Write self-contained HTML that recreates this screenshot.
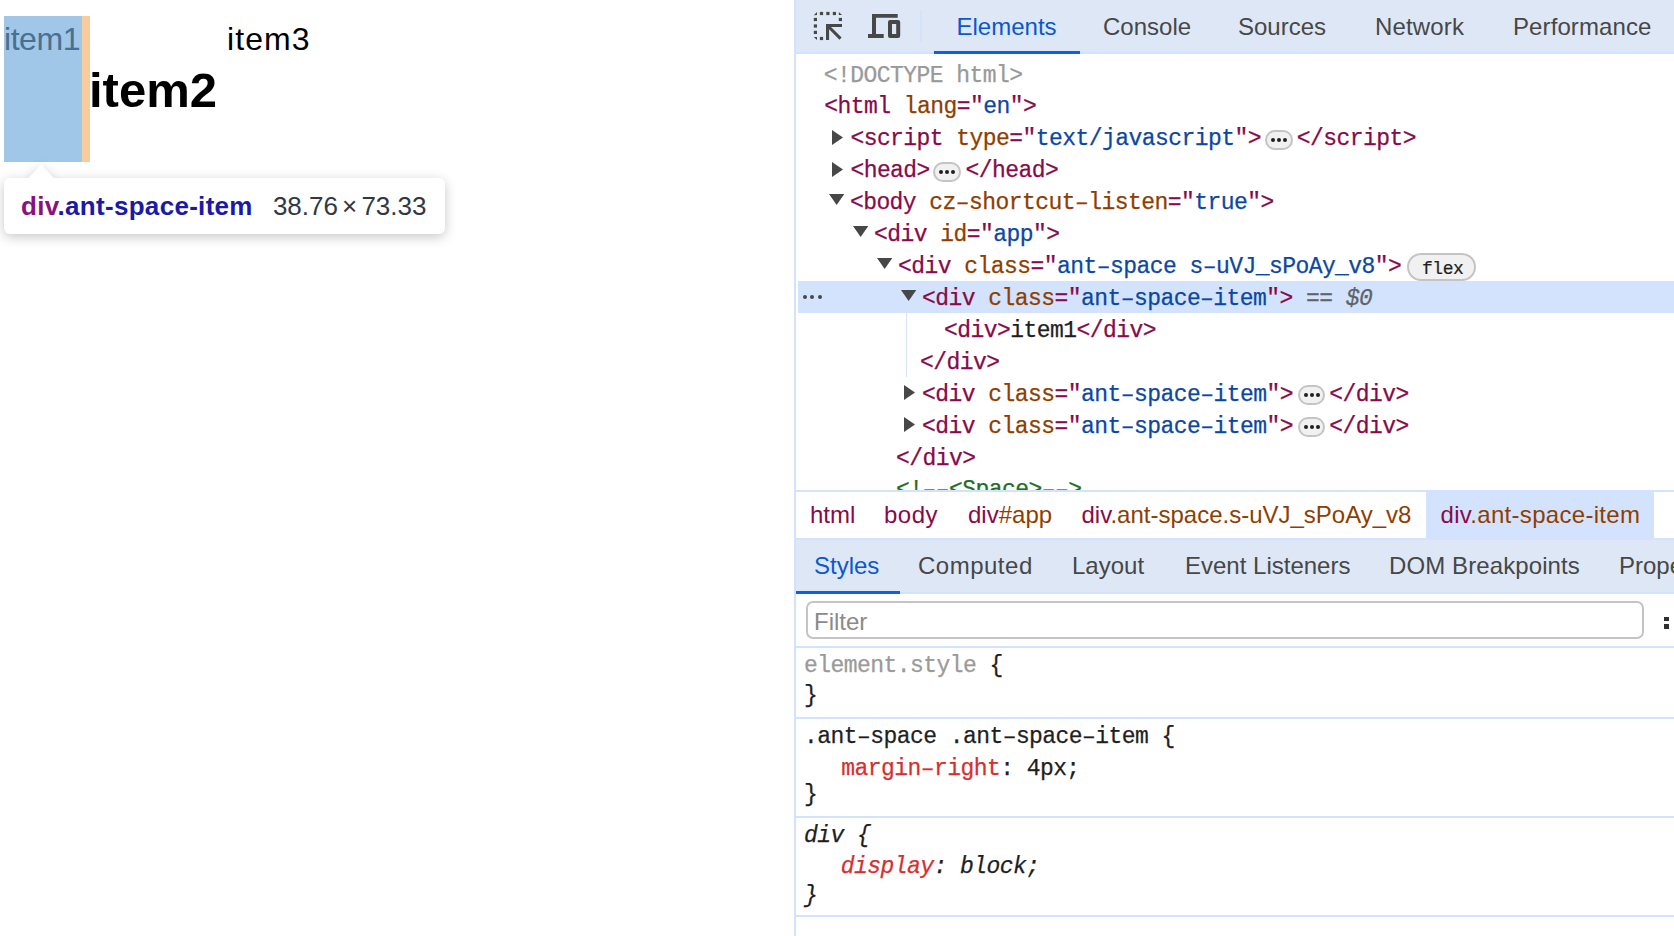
<!DOCTYPE html>
<html><head><meta charset="utf-8"><style>
html,body{margin:0;padding:0}
body{width:1674px;height:936px;position:relative;overflow:hidden;background:#fff}
.t{position:absolute;white-space:pre;line-height:0}
</style></head><body>
<div style="position:absolute;left:4px;top:16px;width:78px;height:145.8px;background:rgb(160,198,232)"></div>
<div style="position:absolute;left:82px;top:16px;width:8px;height:145.8px;background:rgb(249,204,157)"></div>
<div class="t" style="left:4px;top:39px;font-family:'Liberation Sans', sans-serif;font-size:32px;color:rgb(73,111,145);letter-spacing:-0.45px">item1</div>
<div class="t" style="left:89px;top:90px;font-family:'Liberation Sans', sans-serif;font-size:49px;color:#000;font-weight:bold">item2</div>
<div class="t" style="left:227px;top:39px;font-family:'Liberation Sans', sans-serif;font-size:32px;color:#000;letter-spacing:1.1px">item3</div>
<div style="position:absolute;left:0;top:150px;width:460px;height:100px;filter:drop-shadow(0 3px 6px rgba(0,0,0,.22))"><svg style="position:absolute;left:0;top:0" width="80" height="40"><path d="M27.5 29 L41.1 14.4 L54.7 29 Z" fill="#fff"/></svg><div style="position:absolute;left:4px;top:28px;width:440.5px;height:56px;background:#fff;border-radius:6px"></div></div>
<div class="t" style="left:21px;top:205.6px;font-family:'Liberation Sans', sans-serif;font-size:26px;color:#000;font-weight:bold;letter-spacing:0.3px"><span style="color:#881280">div</span><span style="color:#1a1aa6">.ant-space-item</span></div>
<div class="t" style="left:272.9px;top:205.6px;font-family:'Liberation Sans', sans-serif;font-size:26px;color:#303942;">38.76</div>
<div class="t" style="left:342px;top:205.6px;font-family:'Liberation Sans', sans-serif;font-size:26px;color:#303942;">×</div>
<div class="t" style="left:361.4px;top:205.6px;font-family:'Liberation Sans', sans-serif;font-size:26px;color:#303942;">73.33</div>
<div style="position:absolute;left:794px;top:0px;width:2px;height:936px;background:#d3e3fd"></div>
<div style="position:absolute;left:796px;top:0px;width:878px;height:52px;background:#dee7f6"></div>
<div style="position:absolute;left:796px;top:52px;width:878px;height:2px;background:#d3e3fd"></div>
<svg style="position:absolute;left:810px;top:8px" width="36" height="36" viewBox="0 0 36 36" fill="#474747">
<path d="M3.8 7.2 L7 3.9 L7 7.1 Z"/>
<rect x="9.9" y="3.9" width="3.2" height="3.2"/><rect x="16.3" y="3.9" width="3.2" height="3.2"/><rect x="22.8" y="3.9" width="3.2" height="3.2"/>
<path d="M28.8 3.9 L32 7.1 L28.8 7.1 Z"/>
<rect x="3.8" y="9.9" width="3.2" height="3.2"/><rect x="3.8" y="16.4" width="3.2" height="3.2"/><rect x="3.8" y="22.8" width="3.2" height="3.2"/>
<rect x="28.8" y="9.9" width="3.2" height="3.2"/>
<path d="M3.8 28.9 L7 28.9 L7 32 Z"/><rect x="9.9" y="28.9" width="3.2" height="3.2"/>
<path d="M16 16 L32 16 L32 19 L21 19 L31.6 29.6 L29.5 31.7 L19.1 21.2 L19.1 32 L16 32 Z"/>
</svg>
<svg style="position:absolute;left:864px;top:10px" width="40" height="32" viewBox="0 0 40 32" fill="#474747">
<path d="M8 4 L33.7 4 L33.7 7.8 L12 7.8 L12 24 L19.7 24 L19.7 28 L4 28 L4 24 L8 24 Z"/>
<path fill-rule="evenodd" d="M26 10 L34 10 Q36.2 10 36.2 12.2 L36.2 25.8 Q36.2 28 34 28 L26 28 Q24 28 24 25.8 L24 12.2 Q24 10 26 10 Z M28 14 L28 24 L32.2 24 L32.2 14 Z"/>
</svg>
<div style="position:absolute;left:920px;top:10px;width:2px;height:32px;background:#d3e3fd"></div>
<div class="t" style="left:956.5px;top:26.799999999999997px;font-family:'Liberation Sans', sans-serif;font-size:24px;color:#0b57d0;">Elements</div>
<div style="position:absolute;left:934px;top:50.7px;width:146px;height:3.4px;background:#0c60e6"></div>
<div class="t" style="left:1103px;top:26.799999999999997px;font-family:'Liberation Sans', sans-serif;font-size:24px;color:#474747;">Console</div>
<div class="t" style="left:1238px;top:26.799999999999997px;font-family:'Liberation Sans', sans-serif;font-size:24px;color:#474747;">Sources</div>
<div class="t" style="left:1375px;top:26.799999999999997px;font-family:'Liberation Sans', sans-serif;font-size:24px;color:#474747;letter-spacing:0.15px">Network</div>
<div class="t" style="left:1513px;top:26.799999999999997px;font-family:'Liberation Sans', sans-serif;font-size:24px;color:#474747;letter-spacing:0.1px">Performance</div>
<div style="position:absolute;left:798px;top:281.1px;width:876px;height:31.6px;background:#d3e3fd"></div>
<div class="t" style="left:823.8px;top:75.5px;font-family:'Liberation Mono', monospace;font-size:23px;color:#999999;letter-spacing:-0.560px;-webkit-text-stroke:0.25px currentColor;">&lt;!DOCTYPE html&gt;</div>
<div class="t" style="left:824.2px;top:107.42px;font-family:'Liberation Mono', monospace;font-size:23px;color:#880a4a;letter-spacing:-0.560px;-webkit-text-stroke:0.25px currentColor;"><span style="color:#880a4a">&lt;html </span><span style="color:#8f3e00">lang</span><span style="color:#880a4a">="</span><span style="color:#0c47a3">en</span><span style="color:#880a4a">"&gt;</span></div>
<svg style="position:absolute;left:831.8px;top:129.84px" width="12" height="16"><path d="M0 0 L11 7.5 L0 15 Z" fill="#474747"/></svg>
<div class="t" style="left:850.4px;top:139.34px;font-family:'Liberation Mono', monospace;font-size:23px;color:#880a4a;letter-spacing:-0.560px;-webkit-text-stroke:0.25px currentColor;"><span style="color:#880a4a">&lt;script </span><span style="color:#8f3e00">type</span><span style="color:#880a4a">="</span><span style="color:#0c47a3">text/javascript</span><span style="color:#880a4a">"&gt;</span></div>
<div style="position:absolute;left:1265.2px;top:130.04px;width:23.5px;height:15.7px;border:2px solid #c4c4c4;background:#f1f1f1;border-radius:10px"></div>
<div style="position:absolute;left:1270.9px;top:138.04px;width:4px;height:4px;border-radius:2px;background:#1f1f1f"></div>
<div style="position:absolute;left:1276.9px;top:138.04px;width:4px;height:4px;border-radius:2px;background:#1f1f1f"></div>
<div style="position:absolute;left:1283.0px;top:138.04px;width:4px;height:4px;border-radius:2px;background:#1f1f1f"></div>
<div class="t" style="left:1296.7px;top:139.34px;font-family:'Liberation Mono', monospace;font-size:23px;color:#880a4a;letter-spacing:-0.560px;-webkit-text-stroke:0.25px currentColor;"><span style="color:#880a4a">&lt;/script&gt;</span></div>
<svg style="position:absolute;left:831.8px;top:161.76px" width="12" height="16"><path d="M0 0 L11 7.5 L0 15 Z" fill="#474747"/></svg>
<div class="t" style="left:850.4px;top:171.26px;font-family:'Liberation Mono', monospace;font-size:23px;color:#880a4a;letter-spacing:-0.560px;-webkit-text-stroke:0.25px currentColor;"><span style="color:#880a4a">&lt;head&gt;</span></div>
<div style="position:absolute;left:933.3px;top:161.95999999999998px;width:23.5px;height:15.7px;border:2px solid #c4c4c4;background:#f1f1f1;border-radius:10px"></div>
<div style="position:absolute;left:939.0px;top:169.95999999999998px;width:4px;height:4px;border-radius:2px;background:#1f1f1f"></div>
<div style="position:absolute;left:945.0px;top:169.95999999999998px;width:4px;height:4px;border-radius:2px;background:#1f1f1f"></div>
<div style="position:absolute;left:951.0999999999999px;top:169.95999999999998px;width:4px;height:4px;border-radius:2px;background:#1f1f1f"></div>
<div class="t" style="left:965.5px;top:171.26px;font-family:'Liberation Mono', monospace;font-size:23px;color:#880a4a;letter-spacing:-0.560px;-webkit-text-stroke:0.25px currentColor;"><span style="color:#880a4a">&lt;/head&gt;</span></div>
<svg style="position:absolute;left:829.3px;top:193.88px" width="16" height="12"><path d="M0 0 L15.3 0 L7.65 11 Z" fill="#474747"/></svg>
<div class="t" style="left:849.9px;top:203.18px;font-family:'Liberation Mono', monospace;font-size:23px;color:#880a4a;letter-spacing:-0.560px;-webkit-text-stroke:0.25px currentColor;"><span style="color:#880a4a">&lt;body </span><span style="color:#8f3e00">cz–shortcut–listen</span><span style="color:#880a4a">="</span><span style="color:#0c47a3">true</span><span style="color:#880a4a">"&gt;</span></div>
<svg style="position:absolute;left:853.3px;top:225.8px" width="16" height="12"><path d="M0 0 L15.3 0 L7.65 11 Z" fill="#474747"/></svg>
<div class="t" style="left:874.1px;top:235.10000000000002px;font-family:'Liberation Mono', monospace;font-size:23px;color:#880a4a;letter-spacing:-0.560px;-webkit-text-stroke:0.25px currentColor;"><span style="color:#880a4a">&lt;div </span><span style="color:#8f3e00">id</span><span style="color:#880a4a">="</span><span style="color:#0c47a3">app</span><span style="color:#880a4a">"&gt;</span></div>
<svg style="position:absolute;left:877.2px;top:257.71999999999997px" width="16" height="12"><path d="M0 0 L15.3 0 L7.65 11 Z" fill="#474747"/></svg>
<div class="t" style="left:898.1px;top:267.02px;font-family:'Liberation Mono', monospace;font-size:23px;color:#880a4a;letter-spacing:-0.560px;-webkit-text-stroke:0.25px currentColor;"><span style="color:#880a4a">&lt;div </span><span style="color:#8f3e00">class</span><span style="color:#880a4a">="</span><span style="color:#0c47a3">ant–space s–uVJ_sPoAy_v8</span><span style="color:#880a4a">"&gt;</span></div>
<div style="position:absolute;left:1407.2px;top:253.3px;width:64.5px;height:23.6px;border:2px solid #c4c4c4;background:#f1f1f1;border-radius:14px"></div>
<div class="t" style="left:1422px;top:268.7px;font-family:'Liberation Mono', monospace;font-size:18px;color:#1f1f1f;letter-spacing:-0.45px;-webkit-text-stroke:0.2px #1f1f1f">flex</div>
<div style="position:absolute;left:802.5px;top:294.94px;width:20px;height:4px"><div style="position:absolute;left:0px;top:0;width:4px;height:4px;border-radius:2px;background:#474747"></div><div style="position:absolute;left:7.5px;top:0;width:4px;height:4px;border-radius:2px;background:#474747"></div><div style="position:absolute;left:15px;top:0;width:4px;height:4px;border-radius:2px;background:#474747"></div></div>
<svg style="position:absolute;left:901.1px;top:289.64px" width="16" height="12"><path d="M0 0 L15.3 0 L7.65 11 Z" fill="#474747"/></svg>
<div class="t" style="left:922.0px;top:298.94px;font-family:'Liberation Mono', monospace;font-size:23px;color:#880a4a;letter-spacing:-0.560px;-webkit-text-stroke:0.25px currentColor;"><span style="color:#880a4a">&lt;div </span><span style="color:#8f3e00">class</span><span style="color:#880a4a">="</span><span style="color:#0c47a3">ant–space–item</span><span style="color:#880a4a">"&gt;</span><span style="color:#5f6368;font-style:italic"> == $0</span></div>
<div style="position:absolute;left:906px;top:312.7px;width:1px;height:64px;background:#d3e3fd"></div>
<div class="t" style="left:944.0px;top:330.86px;font-family:'Liberation Mono', monospace;font-size:23px;color:#880a4a;letter-spacing:-0.560px;-webkit-text-stroke:0.25px currentColor;"><span style="color:#880a4a">&lt;div&gt;</span><span style="color:#1f1f1f">item1</span><span style="color:#880a4a">&lt;/div&gt;</span></div>
<div class="t" style="left:920.1px;top:362.78000000000003px;font-family:'Liberation Mono', monospace;font-size:23px;color:#880a4a;letter-spacing:-0.560px;-webkit-text-stroke:0.25px currentColor;"><span style="color:#880a4a">&lt;/div&gt;</span></div>
<svg style="position:absolute;left:904px;top:385.20000000000005px" width="12" height="16"><path d="M0 0 L11 7.5 L0 15 Z" fill="#474747"/></svg>
<div class="t" style="left:922.1px;top:394.70000000000005px;font-family:'Liberation Mono', monospace;font-size:23px;color:#880a4a;letter-spacing:-0.560px;-webkit-text-stroke:0.25px currentColor;"><span style="color:#880a4a">&lt;div </span><span style="color:#8f3e00">class</span><span style="color:#880a4a">="</span><span style="color:#0c47a3">ant–space–item</span><span style="color:#880a4a">"&gt;</span></div>
<div style="position:absolute;left:1297.8px;top:385.40000000000003px;width:23.5px;height:15.7px;border:2px solid #c4c4c4;background:#f1f1f1;border-radius:10px"></div>
<div style="position:absolute;left:1303.5px;top:393.40000000000003px;width:4px;height:4px;border-radius:2px;background:#1f1f1f"></div>
<div style="position:absolute;left:1309.5px;top:393.40000000000003px;width:4px;height:4px;border-radius:2px;background:#1f1f1f"></div>
<div style="position:absolute;left:1315.6px;top:393.40000000000003px;width:4px;height:4px;border-radius:2px;background:#1f1f1f"></div>
<div class="t" style="left:1329.2px;top:394.70000000000005px;font-family:'Liberation Mono', monospace;font-size:23px;color:#880a4a;letter-spacing:-0.560px;-webkit-text-stroke:0.25px currentColor;"><span style="color:#880a4a">&lt;/div&gt;</span></div>
<svg style="position:absolute;left:904px;top:417.12px" width="12" height="16"><path d="M0 0 L11 7.5 L0 15 Z" fill="#474747"/></svg>
<div class="t" style="left:922.1px;top:426.62px;font-family:'Liberation Mono', monospace;font-size:23px;color:#880a4a;letter-spacing:-0.560px;-webkit-text-stroke:0.25px currentColor;"><span style="color:#880a4a">&lt;div </span><span style="color:#8f3e00">class</span><span style="color:#880a4a">="</span><span style="color:#0c47a3">ant–space–item</span><span style="color:#880a4a">"&gt;</span></div>
<div style="position:absolute;left:1297.8px;top:417.32px;width:23.5px;height:15.7px;border:2px solid #c4c4c4;background:#f1f1f1;border-radius:10px"></div>
<div style="position:absolute;left:1303.5px;top:425.32px;width:4px;height:4px;border-radius:2px;background:#1f1f1f"></div>
<div style="position:absolute;left:1309.5px;top:425.32px;width:4px;height:4px;border-radius:2px;background:#1f1f1f"></div>
<div style="position:absolute;left:1315.6px;top:425.32px;width:4px;height:4px;border-radius:2px;background:#1f1f1f"></div>
<div class="t" style="left:1329.2px;top:426.62px;font-family:'Liberation Mono', monospace;font-size:23px;color:#880a4a;letter-spacing:-0.560px;-webkit-text-stroke:0.25px currentColor;"><span style="color:#880a4a">&lt;/div&gt;</span></div>
<div class="t" style="left:896.1px;top:458.54px;font-family:'Liberation Mono', monospace;font-size:23px;color:#880a4a;letter-spacing:-0.560px;-webkit-text-stroke:0.25px currentColor;"><span style="color:#880a4a">&lt;/div&gt;</span></div>
<div style="position:absolute;left:796px;top:470px;width:878px;height:19.8px;overflow:hidden">
<div class="t" style="left:100.10000000000002px;top:20.460000000000036px;font-family:'Liberation Mono', monospace;font-size:23px;color:#236e25;letter-spacing:-0.560px;-webkit-text-stroke:0.25px currentColor">&lt;!––&lt;Space&gt;––&gt;</div>
</div>
<div style="position:absolute;left:796px;top:489.8px;width:878px;height:2.2px;background:#d3e3fd"></div>
<div style="position:absolute;left:1426px;top:490px;width:228px;height:49px;background:#d3e3fd"></div>
<div class="t" style="left:810px;top:515.3px;font-family:'Liberation Sans', sans-serif;font-size:24px;color:#000;"><span style="color:#880a4a">html</span></div>
<div class="t" style="left:884px;top:515.3px;font-family:'Liberation Sans', sans-serif;font-size:24px;color:#000;letter-spacing:0.5px"><span style="color:#880a4a">body</span></div>
<div class="t" style="left:968px;top:515.3px;font-family:'Liberation Sans', sans-serif;font-size:24px;color:#000;"><span style="color:#880a4a">div</span><span style="color:#8f3e00">#app</span></div>
<div class="t" style="left:1081.5px;top:515.3px;font-family:'Liberation Sans', sans-serif;font-size:24px;color:#000;"><span style="color:#880a4a">div</span><span style="color:#8f3e00">.ant-space.s-uVJ_sPoAy_v8</span></div>
<div class="t" style="left:1440.5px;top:515.3px;font-family:'Liberation Sans', sans-serif;font-size:24px;color:#000;letter-spacing:0.3px"><span style="color:#880a4a">div</span><span style="color:#8f3e00">.ant-space-item</span></div>
<div style="position:absolute;left:796px;top:538.2px;width:878px;height:1.6px;background:#d3e3fd"></div>
<div style="position:absolute;left:796px;top:539.8px;width:878px;height:52px;background:#dee7f6"></div>
<div style="position:absolute;left:796px;top:591.8px;width:878px;height:2px;background:#d3e3fd"></div>
<div style="position:absolute;left:796px;top:590.5px;width:104px;height:3.4px;background:#0c60e6"></div>
<div class="t" style="left:814px;top:566.4px;font-family:'Liberation Sans', sans-serif;font-size:24px;color:#0b57d0;">Styles</div>
<div class="t" style="left:918px;top:566.4px;font-family:'Liberation Sans', sans-serif;font-size:24px;color:#474747;letter-spacing:0.5px">Computed</div>
<div class="t" style="left:1072px;top:566.4px;font-family:'Liberation Sans', sans-serif;font-size:24px;color:#474747;">Layout</div>
<div class="t" style="left:1185px;top:566.4px;font-family:'Liberation Sans', sans-serif;font-size:24px;color:#474747;">Event Listeners</div>
<div class="t" style="left:1389px;top:566.4px;font-family:'Liberation Sans', sans-serif;font-size:24px;color:#474747;letter-spacing:0.1px">DOM Breakpoints</div>
<div class="t" style="left:1619px;top:566.4px;font-family:'Liberation Sans', sans-serif;font-size:24px;color:#474747;">Properties</div>
<div style="position:absolute;left:806.2px;top:601.2px;width:833.4px;height:33.4px;border:2px solid #c4c4c4;border-radius:7px;background:#fff"></div>
<div class="t" style="left:814px;top:622px;font-family:'Liberation Sans', sans-serif;font-size:24px;color:#8a8a8a;">Filter</div>
<div style="position:absolute;left:1664.3px;top:616.5px;width:4.6px;height:4.8px;background:#303030"></div><div style="position:absolute;left:1664.3px;top:623.8px;width:4.6px;height:4.8px;background:#303030"></div>
<div style="position:absolute;left:796px;top:646.3px;width:878px;height:1.6px;background:#d3e3fd"></div>
<div class="t" style="left:804px;top:665.5px;font-family:'Liberation Mono', monospace;font-size:23px;color:#1f1f1f;letter-spacing:-0.560px;-webkit-text-stroke:0.25px currentColor"><span style="color:#9a9a9a">element.style</span> {</div>
<div class="t" style="left:804px;top:695.5px;font-family:'Liberation Mono', monospace;font-size:23px;color:#1f1f1f;letter-spacing:-0.560px;-webkit-text-stroke:0.25px currentColor">}</div>
<div style="position:absolute;left:796px;top:717px;width:878px;height:1.6px;background:#d3e3fd"></div>
<div class="t" style="left:804px;top:737px;font-family:'Liberation Mono', monospace;font-size:23px;color:#1f1f1f;letter-spacing:-0.560px;-webkit-text-stroke:0.25px currentColor">.ant–space .ant–space–item {</div>
<div class="t" style="left:801.5px;top:769px;font-family:'Liberation Mono', monospace;font-size:23px;color:#1f1f1f;letter-spacing:-0.560px;-webkit-text-stroke:0.25px currentColor">   <span style="color:#d62f2f">margin–right</span>: 4px;</div>
<div class="t" style="left:804px;top:794.5px;font-family:'Liberation Mono', monospace;font-size:23px;color:#1f1f1f;letter-spacing:-0.560px;-webkit-text-stroke:0.25px currentColor">}</div>
<div style="position:absolute;left:796px;top:816px;width:878px;height:1.6px;background:#d3e3fd"></div>
<div class="t" style="left:804px;top:835.6px;font-family:'Liberation Mono', monospace;font-size:23px;color:#1f1f1f;letter-spacing:-0.560px;-webkit-text-stroke:0.25px currentColor;font-style:italic">div {</div>
<div class="t" style="left:801px;top:867.3px;font-family:'Liberation Mono', monospace;font-size:23px;color:#1f1f1f;letter-spacing:-0.560px;-webkit-text-stroke:0.25px currentColor;font-style:italic">   <span style="color:#d62f2f">display</span>: block;</div>
<div class="t" style="left:804px;top:895.5px;font-family:'Liberation Mono', monospace;font-size:23px;color:#1f1f1f;letter-spacing:-0.560px;-webkit-text-stroke:0.25px currentColor;font-style:italic">}</div>
<div style="position:absolute;left:796px;top:915px;width:878px;height:1.6px;background:#d3e3fd"></div>
</body></html>
